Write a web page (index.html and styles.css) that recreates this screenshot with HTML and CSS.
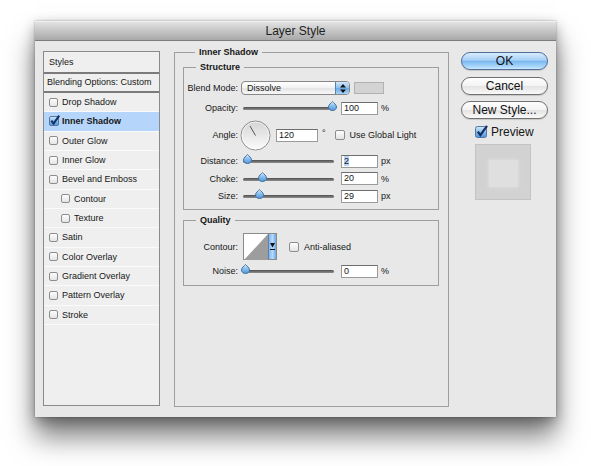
FILE: index.html
```html
<!DOCTYPE html>
<html lang="en">
<head>
  <meta charset="UTF-8" />
  <meta name="viewport" content="width=device-width, initial-scale=1.0" />
  <title>Layer Style</title>
  <link rel="stylesheet" href="styles.css">
</head>
<body>
  <svg class="defs" width="0" height="0">
    <defs>
      <linearGradient id="aqua" x1="0" y1="0" x2="0" y2="1">
        <stop offset="0" stop-color="#d6ebfd"/>
        <stop offset="0.5" stop-color="#86bdee"/>
        <stop offset="1" stop-color="#4e96dd"/>
      </linearGradient>
      <linearGradient id="dialfill" x1="0" y1="0" x2="0" y2="1">
        <stop offset="0" stop-color="#d4d4d4"/>
        <stop offset="1" stop-color="#fcfcfc"/>
      </linearGradient>
    </defs>
  </svg>

  <div class="stage">
    <div class="window">
      <div class="titlebar">Layer Style</div>
      <div class="content">

        <div class="style-list">
          <div class="list-head styles-head">Styles</div>
          <div class="list-head blend-head">Blending Options: Custom</div>
          <div class="list-item"><span class="box"></span>Drop Shadow</div>
          <div class="list-item selected">
            <svg class="box-on" width="11" height="11" viewBox="0 0 11 11"><rect x="0.5" y="1.5" width="9" height="9" rx="1.5" fill="url(#aqua)" stroke="#55759f"/><path d="M2.3 5.6 L4.6 8.6 L10.2 0.6" fill="none" stroke="#15305e" stroke-width="2"/></svg>Inner Shadow
          </div>
          <div class="list-item"><span class="box"></span>Outer Glow</div>
          <div class="list-item"><span class="box"></span>Inner Glow</div>
          <div class="list-item"><span class="box"></span>Bevel and Emboss</div>
          <div class="list-item sub"><span class="box"></span>Contour</div>
          <div class="list-item sub"><span class="box"></span>Texture</div>
          <div class="list-item"><span class="box"></span>Satin</div>
          <div class="list-item"><span class="box"></span>Color Overlay</div>
          <div class="list-item"><span class="box"></span>Gradient Overlay</div>
          <div class="list-item"><span class="box"></span>Pattern Overlay</div>
          <div class="list-item"><span class="box"></span>Stroke</div>
        </div>

        <fieldset class="group effect">
          <legend>Inner Shadow</legend>

          <fieldset class="group structure">
            <legend>Structure</legend>

            <div class="row">
              <span class="label">Blend Mode:</span>
              <div class="popup">
                <span class="popup-text">Dissolve</span>
                <span class="popup-cap"><svg width="6" height="9" viewBox="0 0 6 9"><path d="M3 0 L6 3.4 H0 Z M3 9 L6 5.6 H0 Z" fill="#111"/></svg></span>
              </div>
              <span class="swatch"></span>
            </div>

            <div class="row row-opacity">
              <span class="label">Opacity:</span>
              <div class="slider" style="--v:1">
                <svg class="thumb" width="9" height="10" viewBox="0 0 9 10"><path d="M4.5 0.5 C5.6 1.9 8.5 3.6 8.5 6 C8.5 8.2 6.7 9.5 4.5 9.5 C2.3 9.5 0.5 8.2 0.5 6 C0.5 3.6 3.4 1.9 4.5 0.5 Z" fill="url(#aqua)" stroke="#44709f"/></svg>
              </div>
              <span class="field">100</span>
              <span class="unit">%</span>
            </div>

            <div class="row row-angle">
              <span class="label">Angle:</span>
              <svg class="dial" width="31" height="31" viewBox="0 0 31 31"><circle cx="15.5" cy="15.5" r="14.5" fill="url(#dialfill)" stroke="#8c8c8c"/><circle cx="15.5" cy="15.5" r="13.5" fill="none" stroke="#fff" stroke-opacity="0.6"/><line x1="15.5" y1="15.5" x2="10" y2="6" stroke="#555"/></svg>
              <span class="field angle-field">120</span>
              <span class="unit deg">°</span>
              <span class="box check-box"></span>
              <span class="check-text">Use Global Light</span>
            </div>

            <div class="row row-slider">
              <span class="label">Distance:</span>
              <div class="slider" style="--v:0.02">
                <svg class="thumb" width="9" height="10" viewBox="0 0 9 10"><path d="M4.5 0.5 C5.6 1.9 8.5 3.6 8.5 6 C8.5 8.2 6.7 9.5 4.5 9.5 C2.3 9.5 0.5 8.2 0.5 6 C0.5 3.6 3.4 1.9 4.5 0.5 Z" fill="url(#aqua)" stroke="#44709f"/></svg>
              </div>
              <span class="field"><span class="sel">2</span></span>
              <span class="unit">px</span>
            </div>

            <div class="row row-slider">
              <span class="label">Choke:</span>
              <div class="slider" style="--v:0.2">
                <svg class="thumb" width="9" height="10" viewBox="0 0 9 10"><path d="M4.5 0.5 C5.6 1.9 8.5 3.6 8.5 6 C8.5 8.2 6.7 9.5 4.5 9.5 C2.3 9.5 0.5 8.2 0.5 6 C0.5 3.6 3.4 1.9 4.5 0.5 Z" fill="url(#aqua)" stroke="#44709f"/></svg>
              </div>
              <span class="field">20</span>
              <span class="unit">%</span>
            </div>

            <div class="row row-slider">
              <span class="label">Size:</span>
              <div class="slider" style="--v:0.16">
                <svg class="thumb" width="9" height="10" viewBox="0 0 9 10"><path d="M4.5 0.5 C5.6 1.9 8.5 3.6 8.5 6 C8.5 8.2 6.7 9.5 4.5 9.5 C2.3 9.5 0.5 8.2 0.5 6 C0.5 3.6 3.4 1.9 4.5 0.5 Z" fill="url(#aqua)" stroke="#44709f"/></svg>
              </div>
              <span class="field">29</span>
              <span class="unit">px</span>
            </div>
          </fieldset>

          <fieldset class="group quality">
            <legend>Quality</legend>

            <div class="row row-contour">
              <span class="label">Contour:</span>
              <div class="contour">
                <svg class="curve" width="24" height="26" viewBox="0 0 24 26"><polygon points="0,26 24,0 24,26" fill="#9d9d9d"/></svg>
                <span class="contour-cap"><svg width="5" height="7" viewBox="0 0 5 7"><path d="M0 0 H5 L2.5 4.5 Z M0 6 H5 V7 H0 Z" fill="#111"/></svg></span>
              </div>
              <span class="box check-box aa-box"></span>
              <span class="check-text">Anti-aliased</span>
            </div>

            <div class="row row-noise">
              <span class="label">Noise:</span>
              <div class="slider" style="--v:0">
                <svg class="thumb" width="9" height="10" viewBox="0 0 9 10"><path d="M4.5 0.5 C5.6 1.9 8.5 3.6 8.5 6 C8.5 8.2 6.7 9.5 4.5 9.5 C2.3 9.5 0.5 8.2 0.5 6 C0.5 3.6 3.4 1.9 4.5 0.5 Z" fill="url(#aqua)" stroke="#44709f"/></svg>
              </div>
              <span class="field">0</span>
              <span class="unit">%</span>
            </div>
          </fieldset>
        </fieldset>

        <div class="actions">
          <button class="btn primary">OK</button>
          <button class="btn">Cancel</button>
          <button class="btn">New Style...</button>
          <div class="preview-check">
            <svg width="13" height="13" viewBox="0 0 13 13"><rect x="0.5" y="1.5" width="11" height="11" rx="2" fill="url(#aqua)" stroke="#55759f"/><path d="M2.8 6.6 L5.4 10.2 L12 0.8" fill="none" stroke="#15305e" stroke-width="2.2"/></svg>
            <span>Preview</span>
          </div>
          <div class="preview"><div class="preview-inner"></div></div>
        </div>

      </div>
    </div>
  </div>
</body>
</html>
```

FILE: styles.css
```css
* {
  box-sizing: border-box;
}
body {
  margin: 0;
  background: #fff;
  font-family: "Liberation Sans", Arial, sans-serif;
  font-size: 9px;
  color: #161616;
}
.defs {
  display: block;
  width: 0;
  height: 0;
}
.stage {
  height: 466px;
  padding: 21px 0 0 35px;
}
.window {
  width: 521px;
  height: 396px;
  background: #e8e8e8;
  display: flex;
  flex-direction: column;
  box-shadow: 0 20px 26px rgba(0,0,0,0.5), 0 4px 12px rgba(0,0,0,0.3), 0 0 2px rgba(0,0,0,0.3);
}
.titlebar {
  height: 20px;
  line-height: 19px;
  text-align: center;
  font-size: 12px;
  color: #1e1e1e;
  background: linear-gradient(#e2e2e2, #c8c8c8 45%, #a8a8a8);
  border-bottom: 1px solid #7c7c7c;
  border-top: 1px solid #f0f0f0;
}
.content {
  flex: 1;
  display: flex;
  align-items: flex-start;
  padding: 10px 8px 0 8px;
}

/* styles list */
.style-list {
  flex: none;
  width: 117px;
  height: 355px;
  background: #efefef;
  border: 1px solid #8a8a8a;
}
.list-head {
  border-bottom: 2px solid #7b7b7b;
  white-space: nowrap;
}
.styles-head {
  height: 22px;
  line-height: 20px;
  padding-left: 5px;
}
.blend-head {
  height: 19px;
  line-height: 17px;
  padding-left: 3px;
}
.list-item {
  height: 19.34px;
  display: flex;
  align-items: center;
  padding-left: 5px;
  border-bottom: 1px solid #fafafa;
  white-space: nowrap;
}
.list-item.sub {
  padding-left: 17px;
}
.list-item.selected {
  background: #b6d5fb;
  font-weight: bold;
}
.box {
  flex: none;
  width: 9px;
  height: 9px;
  margin-right: 4px;
  border: 1px solid #8d8d8d;
  border-radius: 2px;
  background: linear-gradient(#fdfdfd, #e4e4e4);
}
.box-on {
  flex: none;
  margin: -2px 2px 0 0;
  overflow: visible;
}

/* group boxes */
.group {
  margin: 0;
  padding: 0;
  min-width: 0;
  border: 1px solid #9e9e9e;
}
.group > legend {
  margin-left: 12px;
  padding: 0 4px;
  font-weight: bold;
  font-size: 9px;
  line-height: 11px;
}
.effect {
  flex: none;
  width: 275px;
  height: 360px;
  margin: -4px 12px 0 14px;
  padding: 4px 9px 0 8px;
}
.structure {
  padding: 8px 0 6px 0;
}
.quality {
  margin-top: 5px;
  padding: 7px 0 7px 0;
}

.row {
  display: flex;
  align-items: center;
  height: 14px;
}
.row-opacity {
  margin-top: 6px;
}
.row-angle {
  height: 30px;
  margin-top: 5px;
}
.row-slider {
  margin-top: 4px;
}
.row-slider + .row-slider {
  margin-top: 3.5px;
}
.row-contour {
  height: 27px;
}
.row-noise {
  margin-top: 4px;
}
.label {
  flex: none;
  width: 55px;
  padding-right: 1px;
  text-align: right;
  white-space: nowrap;
}

.popup {
  flex: none;
  display: flex;
  width: 109px;
  height: 14px;
  margin-left: 2px;
  border: 1px solid #878787;
  border-radius: 4px;
  background: linear-gradient(#ffffff, #f1f1f1 50%, #e4e4e4 51%, #f7f7f7);
}
.popup-text {
  padding-left: 5px;
  line-height: 12px;
}
.popup-cap {
  margin-left: auto;
  width: 14px;
  display: flex;
  align-items: center;
  justify-content: center;
  border-left: 1px solid #5c80ad;
  border-radius: 0 3px 3px 0;
  background: linear-gradient(#d3e8fc, #8cc1ef 50%, #6aaae6 51%, #a9d4f8);
}
.swatch {
  flex: none;
  width: 30px;
  height: 12px;
  margin-left: 4px;
  background: #d3d3d3;
  border: 1px solid #b1b1b1;
}

.slider {
  flex: none;
  position: relative;
  width: 96px;
  height: 14px;
  margin-left: 2px;
}
.slider::before {
  content: "";
  position: absolute;
  left: 2px;
  right: 3px;
  top: 6px;
  height: 3px;
  border-radius: 2px;
  background: linear-gradient(#4f4f4f, #8e8e8e);
}
.thumb {
  position: absolute;
  top: 0;
  left: calc(var(--v) * 87px);
}

.field {
  flex: none;
  width: 37px;
  height: 13px;
  margin-left: 4px;
  padding-left: 2px;
  line-height: 11px;
  background: #fff;
  border: 1px solid #9a9a9a;
  border-top-color: #6e6e6e;
}
.sel {
  background: #b6d5fb;
}
.unit {
  margin-left: 3px;
}
.dial {
  flex: none;
  margin-left: 1px;
}
.angle-field {
  width: 42px;
  margin-left: 5px;
}
.deg {
  margin-left: 4px;
  align-self: flex-start;
  margin-top: 8px;
}
.check-box {
  width: 10px;
  height: 10px;
  margin-left: 9px;
  margin-right: 5px;
}
.aa-box {
  margin-left: 12px;
}
.check-text {
  white-space: nowrap;
}

.contour {
  flex: none;
  display: flex;
  width: 34px;
  height: 27px;
  margin-left: 4px;
  border: 1px solid #8a8a8a;
  background: #fff;
}
.curve {
  flex: none;
  display: block;
}
.contour-cap {
  flex: 1;
  display: flex;
  align-items: center;
  justify-content: center;
  border-left: 1px solid #5c80ad;
  background: linear-gradient(90deg, #7fb6ea, #b8dafb 50%, #6aa8e4);
}

/* buttons column */
.actions {
  flex: none;
  width: 87px;
  margin-top: 1px;
  display: flex;
  flex-direction: column;
}
.btn {
  height: 18px;
  margin: 0 0 6.5px 0;
  padding: 0;
  font-family: "Liberation Sans", Arial, sans-serif;
  font-size: 12px;
  line-height: 16px;
  color: #111;
  border: 1px solid #707070;
  border-radius: 9px;
  background: linear-gradient(#fefefe, #f3f3f3 50%, #e3e3e3 51%, #f9f9f9);
  box-shadow: 0 1px 1px rgba(0,0,0,0.15);
}
.btn.primary {
  border-color: #4f6f99;
  background: linear-gradient(#d9ecfd, #a6d0f6 45%, #7cb8ee 52%, #a9d7fb 85%, #cdeaff);
}
.preview-check {
  display: flex;
  align-items: center;
  height: 13px;
  margin-top: -0.5px;
  padding-left: 14px;
  font-size: 12px;
}
.preview-check svg {
  flex: none;
  margin-right: 3px;
  overflow: visible;
}
.preview {
  width: 56px;
  height: 56px;
  margin: 6px 0 0 14px;
  padding: 15px 13px;
  background: #d2d2d2;
  border: 1px solid #c4c4c4;
}
.preview-inner {
  width: 29px;
  height: 27px;
  background: #dfdfdf;
  box-shadow: 0 0 3px 1px #dcdcdc;
}
```
